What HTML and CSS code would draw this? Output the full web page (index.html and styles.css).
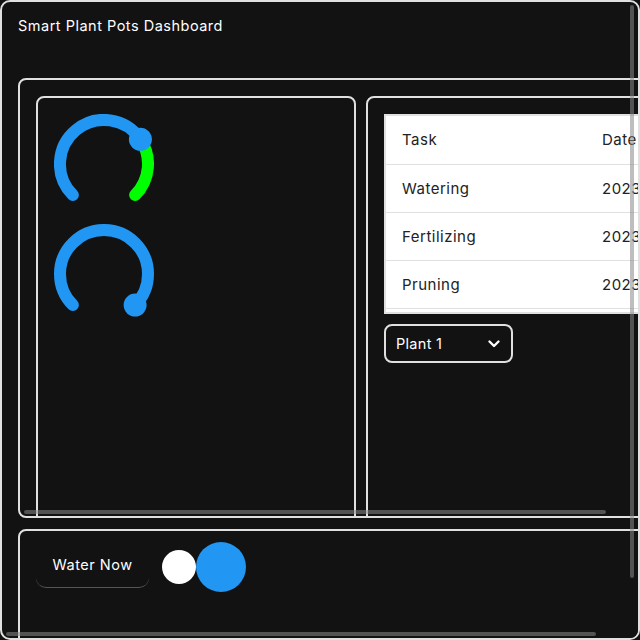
FILE: index.html
```html
<!DOCTYPE html>
<html lang="en">
<head>
<meta charset="utf-8">
<title>Smart Plant Pots Dashboard</title>
<link rel="stylesheet" href="styles.css">
</head>
<body>
<div class="app">
  <h1 class="title">Smart Plant Pots Dashboard</h1>
  <section class="panel panel-main">
    <div class="grid">
      <div class="card card-gauges">
        <svg class="gauge" width="100" height="100" viewBox="0 0 100 100">
          <path d="M18.89 81.11 A44 44 0 1 1 86.4 25.3" fill="none" stroke="#2196f3" stroke-width="12" stroke-linecap="round"/>
          <path d="M86.4 25.3 A44 44 0 0 1 81.11 81.11" fill="none" stroke="#00ff00" stroke-width="12" stroke-linecap="round"/>
          <circle cx="86.4" cy="25.3" r="11.5" fill="#2196f3"/>
        </svg>
        <svg class="gauge" width="100" height="100" viewBox="0 0 100 100">
          <path d="M18.89 81.11 A44 44 0 1 1 81.11 81.11" fill="none" stroke="#2196f3" stroke-width="12" stroke-linecap="round"/>
          <circle cx="81.11" cy="81.11" r="11.5" fill="#2196f3"/>
        </svg>
      </div>
      <div class="card card-schedule">
        <div class="table-wrap">
          <table class="schedule">
            <thead>
              <tr><th class="col-task">Task</th><th>Date</th></tr>
            </thead>
            <tbody>
              <tr><td class="col-task">Watering</td><td>2023-10-01</td></tr>
              <tr><td class="col-task">Fertilizing</td><td>2023-10-05</td></tr>
              <tr><td class="col-task">Pruning</td><td>2023-10-10</td></tr>
              <tr><td class="col-task">Repotting</td><td>2023-10-15</td></tr>
            </tbody>
          </table>
        </div>
        <div class="select">
          <span class="select-label">Plant 1</span>
          <svg class="chev" width="14" height="14" viewBox="0 0 14 14"><path d="M2.5 4.5 L7 9 L11.5 4.5" fill="none" stroke="#fff" stroke-width="2.4" stroke-linecap="round" stroke-linejoin="round"/></svg>
        </div>
      </div>
    </div>
    <span class="scroll-thumb thumb-panel"></span>
  </section>
  <section class="panel panel-controls">
    <button class="water-btn">Water Now</button>
    <div class="toggle">
      <span class="dot dot-off"></span>
      <span class="dot dot-on"></span>
    </div>
  </section>
  <span class="scroll-thumb thumb-v"></span>
  <span class="scroll-thumb thumb-h"></span>
</div>
</body>
</html>
```

FILE: styles.css
```css
* { box-sizing: border-box; }
html, body { margin: 0; padding: 0; background: #121212; }
body { font-family: Inter, "Noto Sans", sans-serif; color: #fff; }

.app {
  position: relative;
  width: 640px;
  height: 640px;
  border: 2px solid #e0e0e0;
  border-radius: 10px;
  background: #121212;
  overflow: hidden;
  padding: 16px;
}

.title {
  margin: 0 0 44px;
  font-size: 14.5px;
  letter-spacing: 0.5px;
  font-weight: 400;
  line-height: 16px;
  color: #fff;
}

.panel {
  border: 2px solid #e0e0e0;
  border-radius: 8px;
  background: #121212;
  width: 647px;
}

.panel-main {
  position: relative;
  height: 440px;
  overflow: hidden;
  padding: 16px;
}

.grid {
  display: grid;
  grid-template-columns: 320px 342px;
  gap: 10px;
  width: 672px;
}

.card {
  border: 2px solid #e0e0e0;
  border-radius: 8px;
  padding: 16px;
  height: 460px;
}

.card-gauges {
  display: flex;
  flex-direction: column;
  gap: 10px;
}
.gauge { display: block; }

.table-wrap {
  border: 2px solid #e0e0e0;
  background: #fff;
  height: 200px;
  overflow: hidden;
}
.schedule {
  border-collapse: collapse;
  table-layout: fixed;
  width: 360px;
  color: #222;
  font-size: 15px;
  letter-spacing: 0.5px;
}
.schedule th, .schedule td {
  text-align: left;
  font-weight: 400;
  height: 48px;
  padding: 0 16px;
  border-bottom: 1px solid #e0e0e0;
  white-space: nowrap;
  overflow: hidden;
}
.schedule .col-task { width: 200px; }

.select {
  margin-top: 10px;
  width: 129px;
  height: 39px;
  border: 2px solid #e0e0e0;
  border-radius: 8px;
  display: flex;
  align-items: center;
  justify-content: space-between;
  padding: 0 10px;
  font-size: 14.5px;
  letter-spacing: 0.3px;
}
.select-label { line-height: 18px; }
.chev { display: block; flex: none; }

.panel-controls {
  margin-top: 11px;
  padding: 11px 16px;
  height: 157px;
  display: flex;
  align-items: flex-start;
  gap: 13px;
}

.water-btn {
  font-family: inherit;
  font-size: 14.5px;
  letter-spacing: 0.5px;
  color: #fff;
  background: transparent;
  border: none;
  border-bottom: 1.5px solid #555;
  border-radius: 10px;
  width: 113px;
  height: 46px;
  padding: 0;
}

.toggle {
  display: flex;
  align-items: center;
  height: 50px;
}
.dot { display: block; border-radius: 50%; }
.dot-off { width: 34px; height: 34px; background: #fff; }
.dot-on { width: 50px; height: 50px; background: #2196f3; }

.scroll-thumb {
  position: absolute;
  display: block;
  background: rgba(136, 136, 136, 0.55);
  border-radius: 2px;
}
.thumb-v { left: 628px; top: 3px; width: 4px; height: 573px; }
.thumb-h { left: 4px; top: 630px; width: 590px; height: 3.5px; }
.thumb-panel { left: 4px; bottom: 2.5px; width: 582px; height: 3.5px; }
```
